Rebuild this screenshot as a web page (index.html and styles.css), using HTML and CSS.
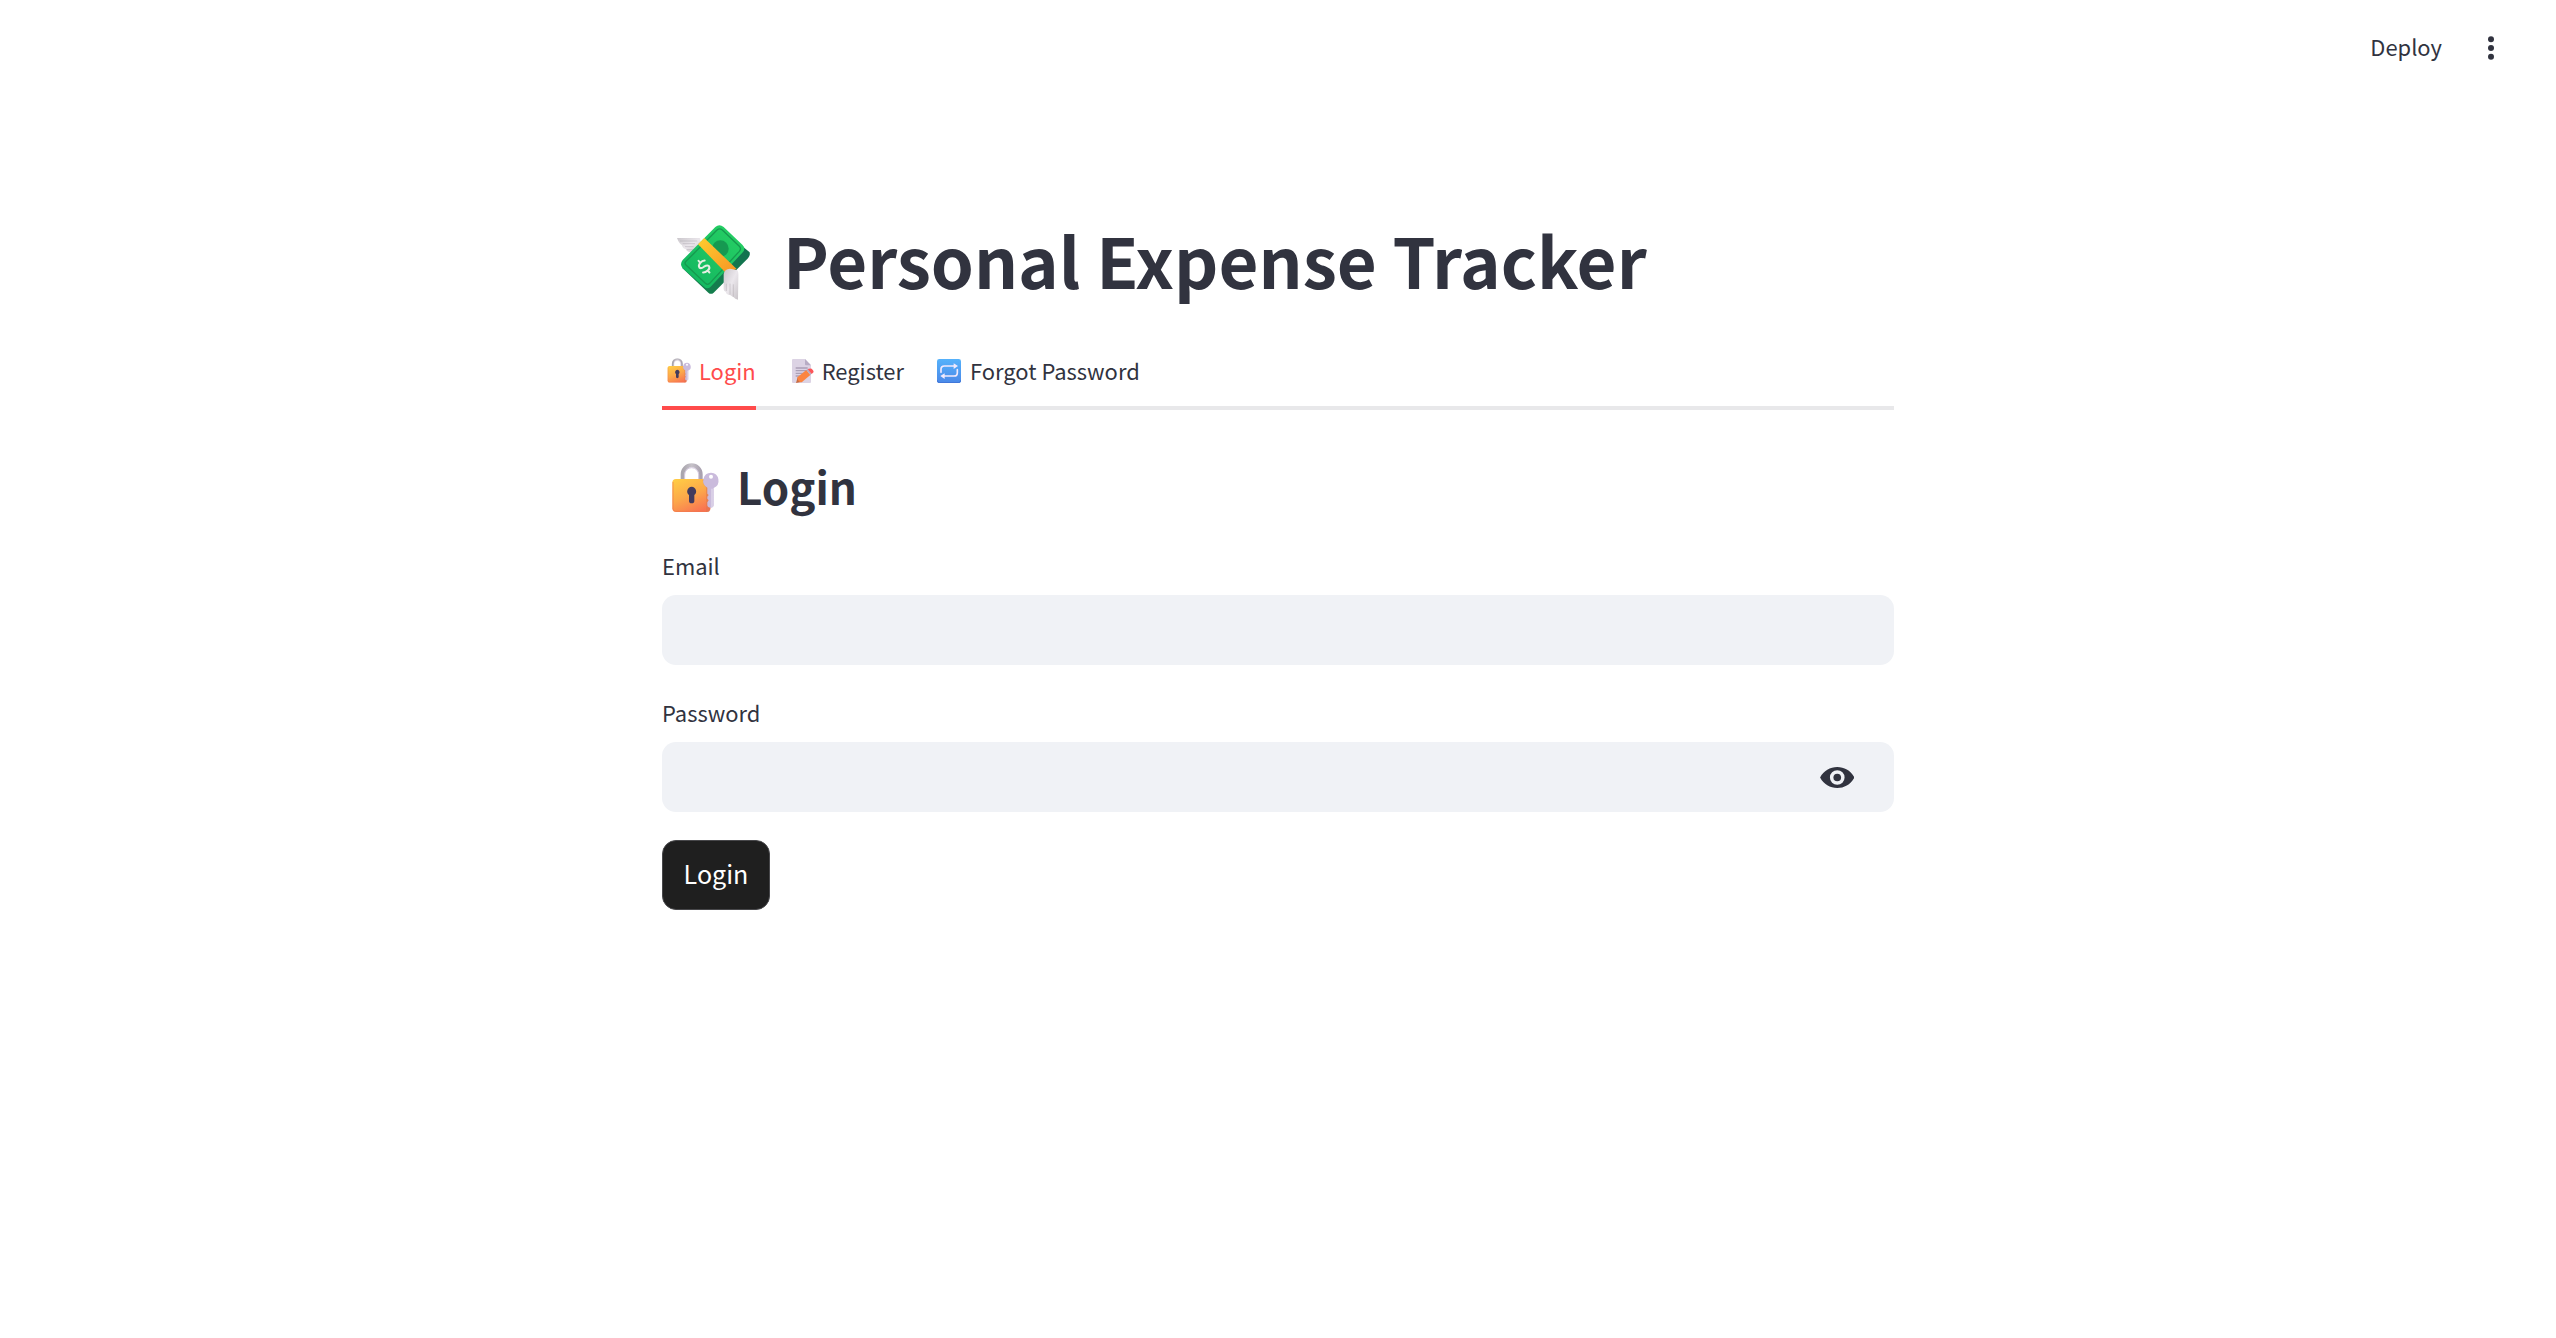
FILE: index.html
```html
<!DOCTYPE html>
<html lang="en">
<head>
<meta charset="utf-8">
<title>Personal Expense Tracker</title>
<link rel="stylesheet" href="styles.css">
</head>
<body>
<svg class="defs" aria-hidden="true">
  <defs>
    <linearGradient id="gold" x1="0.2" y1="0" x2="0.7" y2="1"><stop offset="0" stop-color="#ffca45"/><stop offset=".5" stop-color="#fca84a"/><stop offset="1" stop-color="#f97352"/></linearGradient>
    <linearGradient id="steel" x1="0" y1="0" x2="1" y2="0"><stop offset="0" stop-color="#a9a5ad"/><stop offset=".5" stop-color="#c6c2c9"/><stop offset="1" stop-color="#aaa2b0"/></linearGradient>
    <symbol id="lock" viewBox="63 39 150 150">
      <path d="M98 92V73a27 27 0 0 1 54 0V92" fill="none" stroke="url(#steel)" stroke-width="12"/>
      <path d="M104 88V74a21 21 0 0 1 42 0v14" fill="none" stroke="#d4c8df" stroke-width="3"/>
      <rect x="67" y="87" width="114" height="99" rx="11" fill="url(#gold)"/>
      <path d="M69 96v80q1 8 9 8h92" fill="none" stroke="#ef7650" stroke-width="3" opacity=".65"/>
      <path d="M181 110v66q0 10-10 10h-3V112q-9-8-10-22h13q10 0 10 10z" fill="#d9784d" opacity=".5"/>
      <path d="M125 110a14 14 0 0 0-8 25v18q0 7 8 7t8-7v-18a14 14 0 0 0-8-25z" fill="#433b5d"/>
      <path d="M183 68a24 24 0 0 0-11 45v18l4 4-4 5v6l4 5-4 6v9q1 7 10 7t9-7v-52a24 24 0 0 0-8-46z" fill="#cabbdc"/>
      <path d="M186 116v55" stroke="#ddd3e9" stroke-width="5"/>
      <circle cx="183" cy="80" r="6" fill="#fff"/>
    </symbol>
  </defs>
</svg>

<header class="toolbar">
  <span class="deploy">Deploy</span>
  <svg class="dots" viewBox="0 0 6 24"><circle cx="3" cy="3.2" r="3"/><circle cx="3" cy="12" r="3"/><circle cx="3" cy="20.8" r="3"/></svg>
</header>

<main class="page">
  <h1 class="title">
    <svg class="money" viewBox="72 66 240 240" aria-hidden="true">
      <defs>
        <linearGradient id="note" x1="0" y1="1" x2="1" y2="0"><stop offset="0" stop-color="#10b360"/><stop offset="1" stop-color="#28d264"/></linearGradient>
        <linearGradient id="side" x1="0" y1="1" x2="1" y2="0"><stop offset="0" stop-color="#16824d"/><stop offset="1" stop-color="#11714f"/></linearGradient>
        <linearGradient id="band" x1="0" y1="0" x2="1" y2="1"><stop offset="0" stop-color="#ffcd2f"/><stop offset="1" stop-color="#f79424"/></linearGradient>
        <linearGradient id="wing" x1="0" y1="0" x2="1" y2="1"><stop offset="0" stop-color="#cac6cb"/><stop offset=".5" stop-color="#ebe7ec"/><stop offset="1" stop-color="#c9c4c8"/></linearGradient>
      </defs>
      <path d="M81 114h69l5 26-25 18q-19 0-22-10-10-2-12-12-8-4-15-22z" fill="url(#wing)"/>
      <path d="M90 123h52M98 131h37M105 140h26M110 149h22" stroke="#aaa6ad" stroke-width="2" opacity=".7"/>
      <path d="M96 203l79 75q8 7 16 0l103-103q7-7 5-18l-22-18z" fill="url(#side)"/>
      <path d="M98 180l98-99q12-11 25 0l56 53q12 12 0 24l-95 102q-10 10-20 0L98 205q-10-12 0-25z" fill="url(#note)"/>
      <path d="M108 184l93-94q8-7 16 0l51 49q7 7 0 15l-89 96q-6 6-13 0l-58-55q-6-6 0-11z" fill="none" stroke="#16994f" stroke-width="4"/>
      <circle cx="211" cy="146" r="25" fill="#169951"/>
      <path d="M144 133l19-19 97 93-33 11z" fill="url(#band)"/>
      <g transform="translate(162 200) rotate(-43)" fill="none" stroke="#e5eee3" stroke-width="6" stroke-linecap="round"><path d="M14-12Q8-17 0-16Q-11-15-12-7Q-11-1 0 0Q12 2 12 9Q10 17 0 16Q-9 16-14 11M0-24v8M0 16v8"/></g>
      <path d="M221 222q2-15 19-16l22 5q4 4 3 22l-1 66q-9-1-14-8l-2-1-8-5-5-1q-7-2-8-9-6-2-6-8z" fill="url(#wing)"/>
      <path d="M229 251v22M240 251v33M250 253v37" stroke="#aaa5a9" stroke-width="2" opacity=".65"/>
    </svg>
    <span>Personal Expense Tracker</span>
  </h1>

  <nav class="tabs">
    <a class="tab active"><svg class="ico ico-lock"><use href="#lock"/></svg><span>Login</span></a>
    <a class="tab"><svg class="ico ico-memo" viewBox="423 54 78 78">
      <path d="M426 60q0-3 3-3h36l18 19v50q0 3-3 3h-51q-3 0-3-3z" fill="#dcd3e4"/>
      <path d="M465 57v16q0 3 3 3h15z" fill="#b8adc5"/>
      <path d="M437 84h36M437 92h35M437 100h25M437 108h14" stroke="#aaa0b6" stroke-width="4"/>
      <path d="M438 129l5-17 14 13z" fill="#c86c42"/>
      <path d="M442 112l27-22 12 15-25 21q-5 2-10-3-4-5-4-11z" fill="#fb8541"/>
      <path d="M469 90l4-3 12 14-4 4z" fill="#b7adc0"/>
      <path d="M473 87q7-3 12-1 6 5 6 10l-6 6z" fill="#fc5559"/>
    </svg><span>Register</span></a>
    <a class="tab"><svg class="ico ico-repeat" viewBox="0 0 72 72">
      <defs><linearGradient id="blue" x1="0" y1="0" x2="0" y2="1"><stop offset="0" stop-color="#55b2fb"/><stop offset="1" stop-color="#4a88e8"/></linearGradient></defs>
      <rect width="72" height="72" rx="7" fill="url(#blue)"/><path d="M1 64q0 7 7 7h56q7 0 7-7" fill="none" stroke="#3f75d6" stroke-width="3"/>
      <path d="M12 40v-9q0-10 10-10h30M61 32v9q0 10-10 10H21" fill="none" stroke="#f1e9fc" stroke-width="5" stroke-linecap="round"/>
      <path d="M50 13l13 8-13 9zM23 43l-13 8 13 9z" fill="#f1e9fc"/>
    </svg><span>Forgot Password</span></a>
  </nav>

  <h2 class="heading"><svg class="heading-lock"><use href="#lock"/></svg><span>Login</span></h2>

  <form class="form">
    <label class="label" for="email">Email</label>
    <div class="field"><input id="email" type="text"></div>
    <label class="label second" for="password">Password</label>
    <div class="field">
      <input id="password" type="password">
      <svg class="eye" viewBox="118 558 103 63"><path fill-rule="evenodd" d="M118 589.500C129 569 148 558 169.500 558S210 569 221 589.500C210 610 191 621 169.500 621S129 610 118 589.500zM169.500 567.500a22 22 0 1 0 0 44 22 22 0 1 0 0-44z"/><circle cx="169.500" cy="589.500" r="11.500"/></svg>
    </div>
    <button class="submit" type="button">Login</button>
  </form>
</main>
</body>
</html>
```
FILE: styles.css
```css
* { box-sizing: border-box; }
body {
  margin: 0;
  min-height: 1338px;
  background: #fff;
  color: #31333f;
  font-family: "Noto Sans CJK SC", "Noto Sans", sans-serif;
  font-size: 21.93px;
}
svg { display: block; flex: none; }
.defs { position: absolute; width: 0; height: 0; }

.toolbar {
  display: flex;
  justify-content: flex-end;
  align-items: flex-start;
  height: 105px;
  padding: 30px 62px 0 0;
}
.deploy { line-height: 33px; }
.dots { width: 6px; height: 24px; margin: 6px 0 0 46px; fill: #31333f; }

.page { width: 1232px; margin: 0 auto; padding-top: 108px; }

.title {
  display: flex;
  height: 92px;
  margin: 0;
  padding-left: 12px;
  font-size: 68.9px;
  font-weight: 700;
  line-height: 92px;
  white-space: nowrap;
}
.money { width: 80px; height: 80px; margin: 9px 29px 0 0; }

.tabs {
  display: flex;
  gap: 28px;
  height: 74px;
  margin-top: 31px;
  border-bottom: 4px solid #e8e8ea;
}
.tab {
  display: flex;
  height: 74px;
  line-height: 69px;
  white-space: nowrap;
}
.tab.active { color: #ff4b4b; border-bottom: 4px solid #ff4b4b; }
.ico { height: 25px; margin-top: 22px; }
.ico-lock { width: 25px; margin-left: 4.500px; margin-right: 7.500px; }
.ico-memo { width: 26px; height: 26px; margin-left: 7px; margin-right: 5px; }
.ico-repeat { width: 24px; height: 24px; margin: 23px 9px 0 5px; }

.heading {
  display: flex;
  height: 52px;
  margin: 50px 0 0;
  padding-left: 9px;
  font-size: 43.9px;
  font-weight: 600;
  line-height: 52px;
}
.heading-lock { width: 50px; height: 50px; margin: 3px 16px 0 0; }

.form { display: flex; flex-direction: column; align-items: flex-start; margin-top: 38px; }
.label { height: 45px; line-height: 31px; }
.label.second { margin-top: 32px; }
.field {
  display: flex;
  align-items: center;
  width: 100%;
  height: 70px;
  padding: 0 40px 0 20px;
  border-radius: 14px;
  background: #f0f2f6;
}
.field input { flex: 1; border: 0; outline: 0; background: transparent; font: inherit; }
.eye { width: 34.500px; height: 21px; fill: #31333f; }
.submit {
  width: 108px;
  height: 70px;
  margin-top: 28px;
  padding: 0 0 4px;
  border: 1px solid #47474a;
  border-radius: 14px;
  background: #1f1f1f;
  color: #fff;
  font-family: inherit;
  font-size: 25.07px;
  line-height: 36px;
}
```
